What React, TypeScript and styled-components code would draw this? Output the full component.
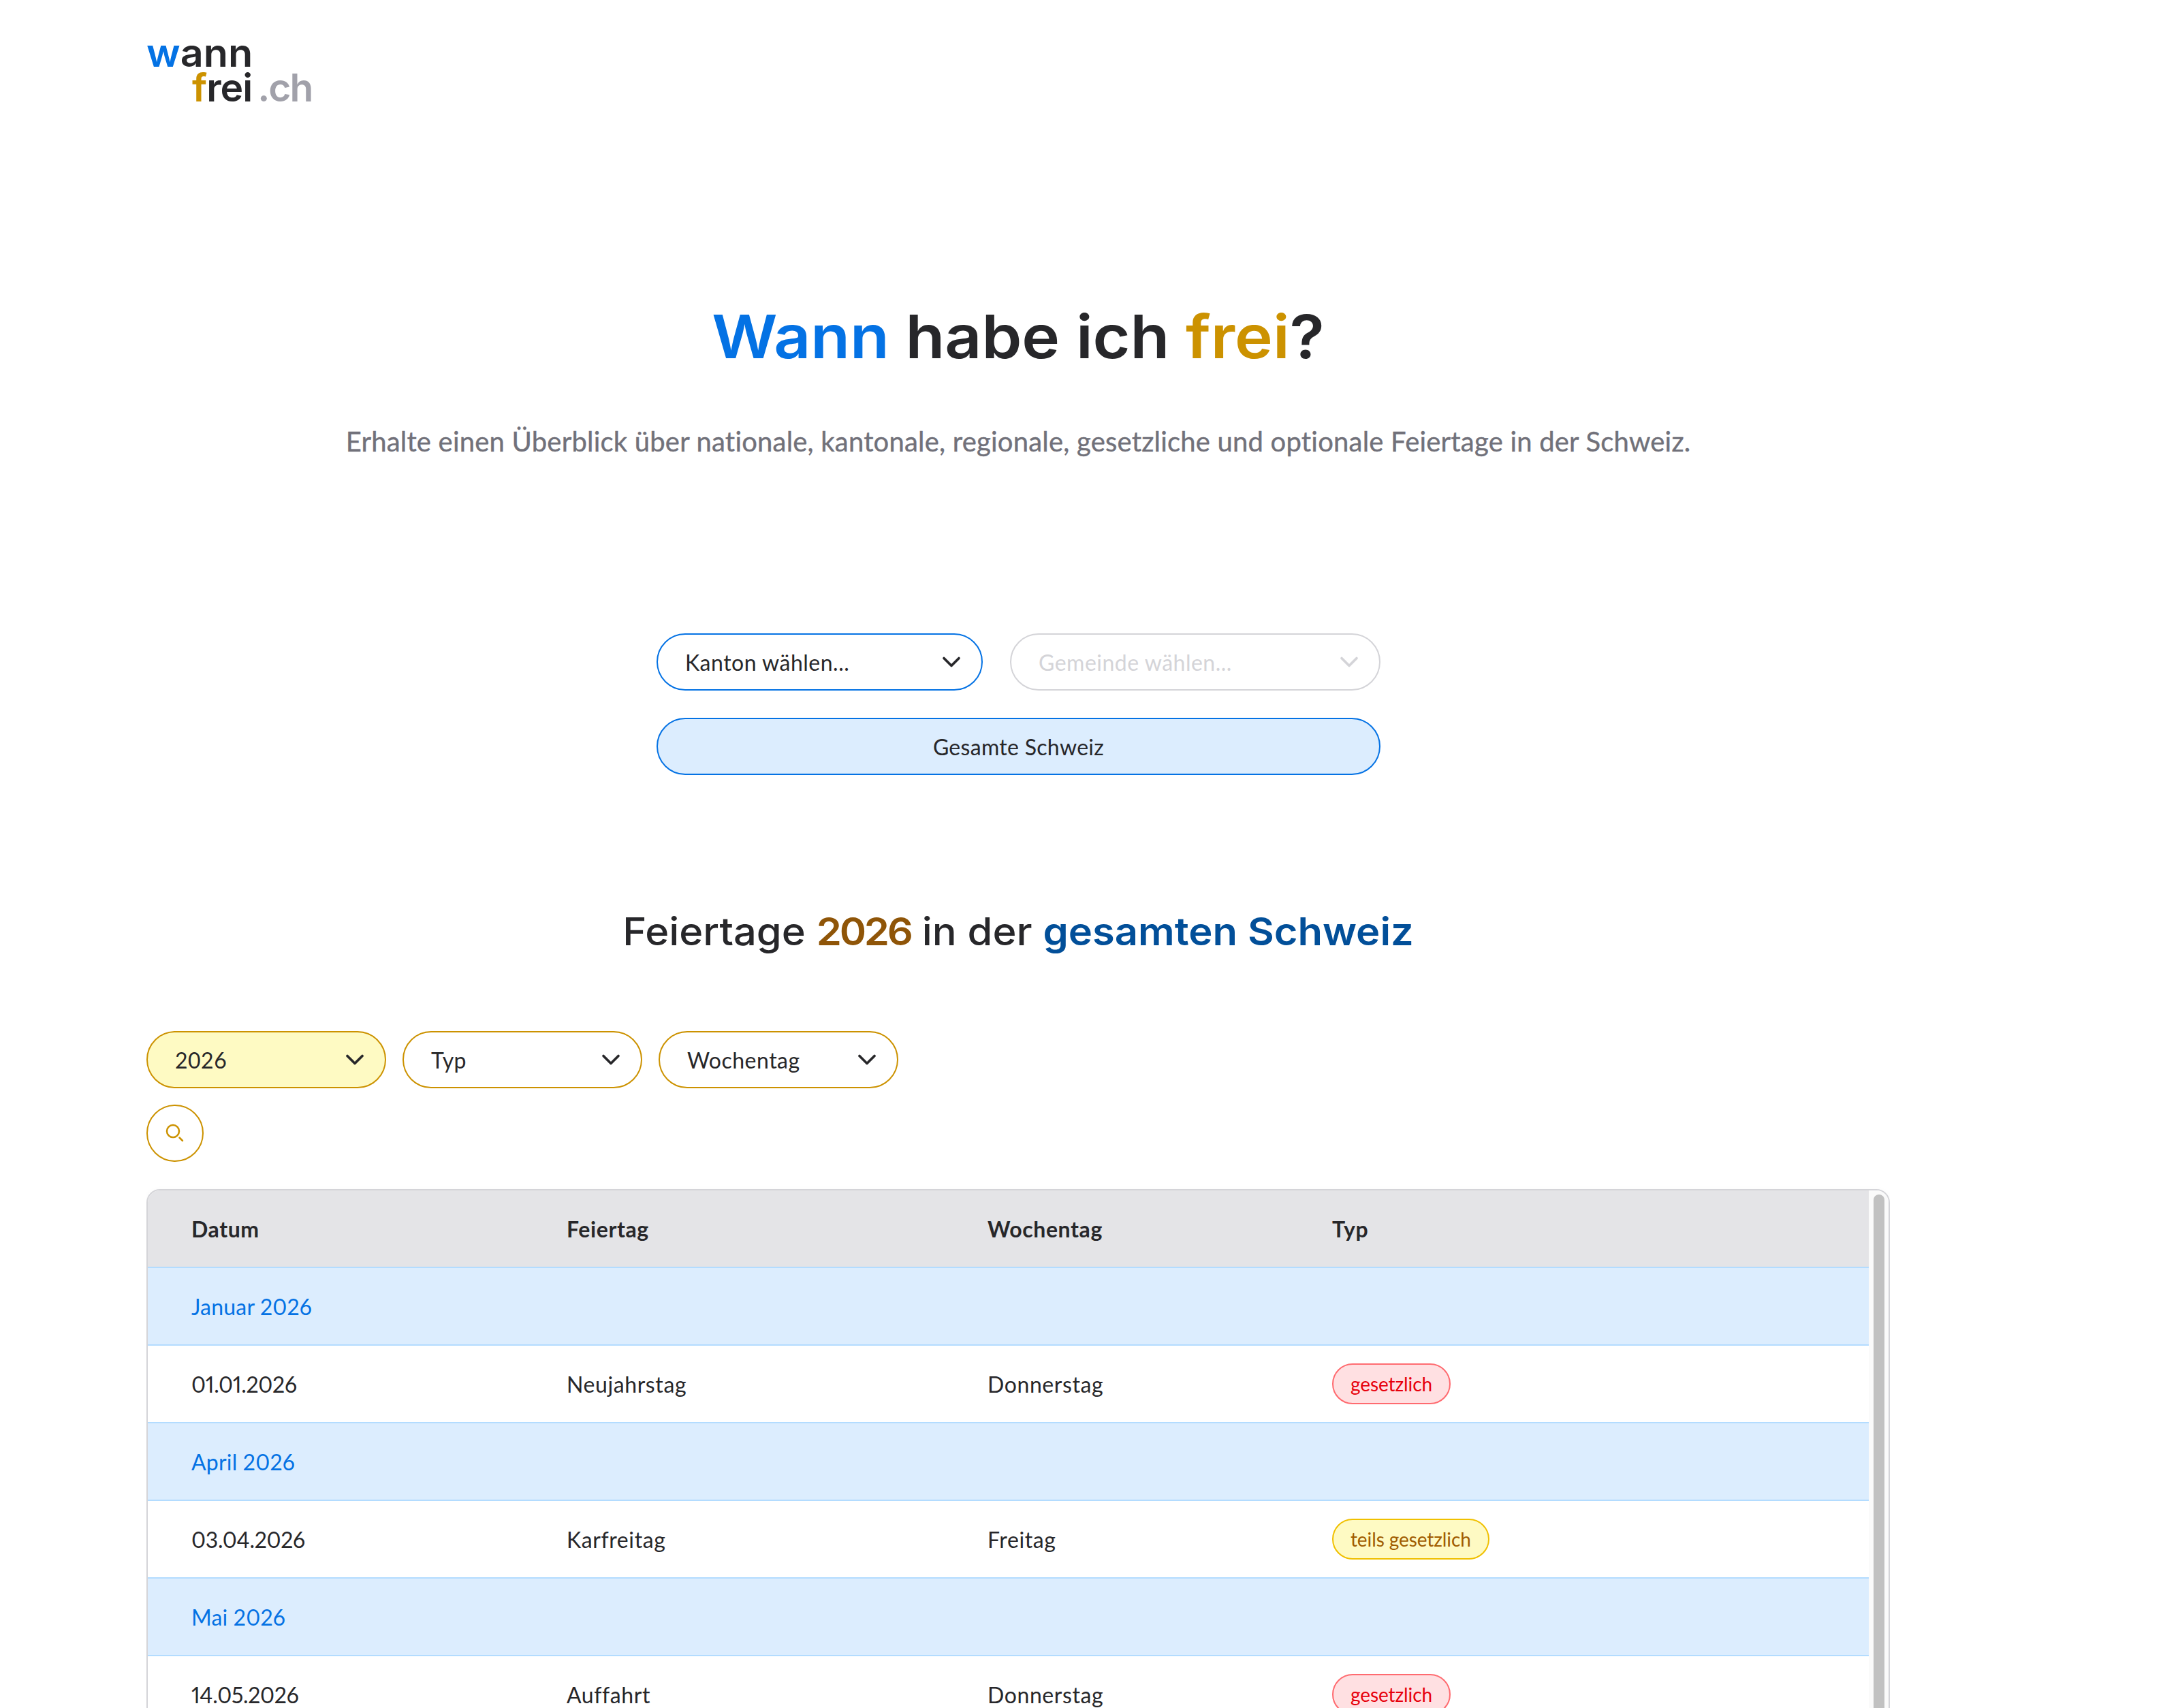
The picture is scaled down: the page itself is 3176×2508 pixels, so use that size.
import React from 'react';
import styled, { createGlobalStyle } from 'styled-components';
import { ChevronDown } from 'lucide-react';

const GlobalStyle = createGlobalStyle`
	html, body {
		margin: 0;
		padding: 0;
		background: #fff;
	}
	body {
		height: 2508px;
		overflow: hidden;
		color: #27272a;
		font-family: 'Lato', 'Noto Sans', sans-serif;
		font-variant-numeric: proportional-nums;
	}
`;

const Page = styled.div`
	width: 2560px;
	height: 2508px;
	overflow: hidden;
	margin-left: 215px;
	padding-top: 52px;
	box-sizing: border-box;
`;

const Logo = styled.div`
	display: flex;
	flex-direction: column;
	align-items: flex-start;
	font-family: 'Inter', sans-serif;
	font-size: 57px;
	font-weight: 600;
	line-height: 51px;
`;

const LogoTop = styled.div`
	transform: scaleX(1.04);
	transform-origin: left center;
`;

const LogoBottom = styled.div`
	padding-left: 67px;
	letter-spacing: -1px;
`;

const Tone = styled.span<{ $color: string; $bold?: boolean; $tight?: boolean }>`
	color: ${p => p.$color};
	font-weight: ${p => (p.$bold ? 600 : 'inherit')};
	letter-spacing: ${p => (p.$tight ? '-3px' : 'inherit')};
`;

const LogoSuffix = styled.span`
	color: #a1a1aa;
	margin-left: 8px;
	letter-spacing: -2px;
`;

const Title = styled.h1`
	margin: 290px 0 0;
	text-align: center;
	font-family: 'Inter', sans-serif;
	font-size: 88px;
	font-weight: 600;
	line-height: 100px;
	transform: scaleX(1.072);
`;

const Lead = styled.p`
	margin: 76px 0 0;
	text-align: center;
	color: #71717a;
	font-size: 40px;
	line-height: 56px;
	letter-spacing: 0.2px;
	-webkit-text-stroke: 0.4px #71717a;
`;

const Region = styled.div`
	display: grid;
	grid-template-columns: 479px 1fr;
	gap: 40px;
	width: 1063px;
	margin: 254px 0 0 749px;
`;

const Select = styled.button<{ $tone?: 'blue' | 'gold' | 'off'; $filled?: boolean }>`
	display: flex;
	align-items: center;
	justify-content: space-between;
	box-sizing: border-box;
	height: 84px;
	width: 100%;
	padding: 0 22px 0 40px;
	border-radius: 42px;
	border: 2px solid
		${p => (p.$tone === 'gold' ? '#cc9200' : p.$tone === 'off' ? '#d4d4d8' : '#0472e4')};
	background: ${p => (p.$filled ? '#fefac3' : '#fff')};
	color: ${p => (p.$tone === 'off' ? '#d4d4d8' : '#27272a')};
	font-family: inherit;
	font-size: 32px;
	letter-spacing: 0.5px;
`;

const WholeCountry = styled.button`
	grid-column: 1 / -1;
	height: 84px;
	border-radius: 42px;
	border: 2px solid #0472e4;
	background: #dcedfe;
	color: #27272a;
	font-family: inherit;
	font-size: 32px;
	letter-spacing: 0.3px;
`;

const SectionTitle = styled.h2`
	margin: 196px 0 0;
	text-align: center;
	font-family: 'Inter', sans-serif;
	font-size: 56px;
	font-weight: 500;
	line-height: 68px;
	transform: scaleX(1.065);
`;

const Filters = styled.div`
	display: grid;
	grid-template-columns: repeat(3, 352px);
	gap: 24px;
	margin-top: 112px;
`;

const SearchButton = styled.button`
	display: flex;
	align-items: center;
	justify-content: center;
	width: 84px;
	height: 84px;
	padding: 0;
	border-radius: 50%;
	border: 2px solid #cc9200;
	background: #fff;
`;

const TableCard = styled.div`
	display: flex;
	height: 900px;
	margin-top: 40px;
	border: 2px solid #d4d4d8;
	border-radius: 20px;
	overflow: hidden;
	box-shadow: 0 4px 12px rgba(0, 0, 0, 0.05);
`;

const Table = styled.table`
	flex: 1;
	align-self: flex-start;
	table-layout: fixed;
	border-collapse: separate;
	border-spacing: 0;
	font-size: 32px;
	letter-spacing: 0.6px;
`;

const HeadCell = styled.th<{ $width: number }>`
	width: ${p => p.$width}px;
	height: 114px;
	padding: 0 0 0 64px;
	box-sizing: border-box;
	background: #e4e4e7;
	border-bottom: 2px solid #b3dcff;
	text-align: left;
	font-weight: 700;
`;

const Cell = styled.td`
	height: 114px;
	padding: 0 0 0 64px;
	box-sizing: border-box;
	border-bottom: 2px solid #b3dcff;
`;

const DateCell = styled(Cell)`
	letter-spacing: -0.3px;
`;

const MonthCell = styled(Cell)`
	background: #dcedfe;
	color: #0472e4;
	letter-spacing: 0.2px;
`;

const Pill = styled.span<{ $partial?: boolean }>`
	display: inline-flex;
	align-items: center;
	box-sizing: border-box;
	height: 60px;
	padding: 0 25px;
	border-radius: 30px;
	font-size: 28px;
	letter-spacing: -0.1px;
	border: 2px solid ${p => (p.$partial ? '#f0c000' : '#ff6b70')};
	background: ${p => (p.$partial ? '#fefac3' : '#ffe0e2')};
	color: ${p => (p.$partial ? '#a05c00' : '#e7000b')};
`;

const ScrollTrack = styled.div`
	flex: none;
	width: 29px;
	padding: 6px 6px 0 7px;
	box-sizing: border-box;
	background: #fafafa;
`;

const ScrollThumb = styled.div`
	height: 1400px;
	border-radius: 8px;
	background: #c1c1c1;
`;

const Chevron = styled(ChevronDown)`
	flex: none;
`;

interface HolidayMonth {
	month: string;
	date: string;
	name: string;
	weekday: string;
	partial?: boolean;
}

const holidays: HolidayMonth[] = [
	{ month: 'Januar 2026', date: '01.01.2026', name: 'Neujahrstag', weekday: 'Donnerstag' },
	{ month: 'April 2026', date: '03.04.2026', name: 'Karfreitag', weekday: 'Freitag', partial: true },
	{ month: 'Mai 2026', date: '14.05.2026', name: 'Auffahrt', weekday: 'Donnerstag' },
];

const BLUE = '#0472e4';
const GOLD = '#cc9200';

const App = () => (
	<Page>
		<GlobalStyle />
		<Logo>
			<LogoTop>
				<Tone $color={BLUE}>w</Tone>ann
			</LogoTop>
			<LogoBottom>
				<Tone $color={GOLD}>f</Tone>rei<LogoSuffix>.ch</LogoSuffix>
			</LogoBottom>
		</Logo>

		<Title>
			<Tone $color={BLUE}>Wann</Tone> habe ich <Tone $color={GOLD}>frei</Tone>?
		</Title>
		<Lead>
			Erhalte einen Überblick über nationale, kantonale, regionale, gesetzliche und optionale
			Feiertage in der Schweiz.
		</Lead>

		<Region>
			<Select $tone="blue">
				Kanton wählen...
				<Chevron size={44} strokeWidth={2} />
			</Select>
			<Select $tone="off">
				Gemeinde wählen...
				<Chevron size={44} strokeWidth={2} />
			</Select>
			<WholeCountry>Gesamte Schweiz</WholeCountry>
		</Region>

		<SectionTitle>
			Feiertage{' '}
			<Tone $color="#8f5508" $bold $tight>
				2026
			</Tone>{' '}
			in der <Tone $color="#024f99" $bold>gesamten Schweiz</Tone>
		</SectionTitle>

		<Filters>
			<Select $tone="gold" $filled>
				2026
				<Chevron size={44} strokeWidth={2} />
			</Select>
			<Select $tone="gold">
				Typ
				<Chevron size={44} strokeWidth={2} />
			</Select>
			<Select $tone="gold">
				Wochentag
				<Chevron size={44} strokeWidth={2} />
			</Select>
			<SearchButton>
				<svg width="28" height="28" viewBox="0 0 28 28" fill="none" stroke={GOLD} strokeLinecap="round">
					<circle cx="11" cy="11" r="9" strokeWidth="2.5" />
					<line x1="20.5" y1="20.5" x2="25" y2="25" strokeWidth="2.5" />
				</svg>
			</SearchButton>
		</Filters>

		<TableCard>
			<Table>
				<thead>
					<tr>
						<HeadCell $width={551}>Datum</HeadCell>
						<HeadCell $width={618}>Feiertag</HeadCell>
						<HeadCell $width={506}>Wochentag</HeadCell>
						<HeadCell $width={852}>Typ</HeadCell>
					</tr>
				</thead>
				<tbody>
					{holidays.map(h => (
						<React.Fragment key={h.date}>
							<tr>
								<MonthCell colSpan={4}>{h.month}</MonthCell>
							</tr>
							<tr>
								<DateCell>{h.date}</DateCell>
								<Cell>{h.name}</Cell>
								<Cell>{h.weekday}</Cell>
								<Cell>
									<Pill $partial={h.partial}>{h.partial ? 'teils gesetzlich' : 'gesetzlich'}</Pill>
								</Cell>
							</tr>
						</React.Fragment>
					))}
				</tbody>
			</Table>
			<ScrollTrack>
				<ScrollThumb />
			</ScrollTrack>
		</TableCard>
	</Page>
);

export default App;
